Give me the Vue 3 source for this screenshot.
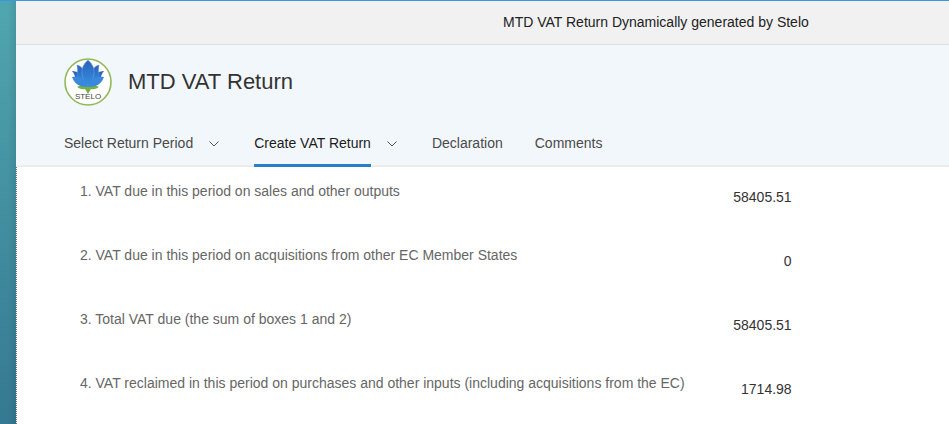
<template>
    <div class="page">
        <main class="window">
            <div class="banner">MTD VAT Return Dynamically generated by Stelo</div>
            <header class="header">
                <div class="brand">
                    <svg class="logo" viewBox="0 0 48 48" role="img" aria-label="Stelo">
                        <defs>
                            <linearGradient id="petal" x1="0" y1="0" x2="0" y2="1">
                                <stop offset="0" stop-color="#2a62b8" />
                                <stop offset="1" stop-color="#3592e6" />
                            </linearGradient>
                        </defs>
                        <circle cx="24" cy="24" r="23" fill="#fff" stroke="#93b956" stroke-width="1.6" />
                        <path d="M16 24 H32 L31 27 L35 29 Q31 32 27 31 L24 36 L21 31 Q17 32 13 29 L17 27Z" fill="#78b043" />
                        <path d="M8 13 Q17 12 23 27 Q15 28 11 24 Q12 17 8 13Z" fill="#2d67bb" />
                        <path d="M40 13 Q31 12 25 27 Q33 28 37 24 Q36 17 40 13Z" fill="#2d67bb" />
                        <path d="M13 7 Q21 8 24 27 Q15 26 13 17 Q14 11 13 7Z" fill="url(#petal)" stroke="#6a9edb" stroke-width=".4" />
                        <path d="M35 7 Q27 8 24 27 Q33 26 35 17 Q34 11 35 7Z" fill="url(#petal)" stroke="#6a9edb" stroke-width=".4" />
                        <path d="M24 2 Q31 8 30 16 Q29 24 24 29 Q19 24 18 16 Q17 8 24 2Z" fill="url(#petal)" stroke="#6a9edb" stroke-width=".6" />
                        <path d="M8 19 Q20 16 24 29 Q11 29 8 19Z M40 19 Q28 16 24 29 Q37 29 40 19Z" fill="#3888dc" />
                        <text x="24" y="41" text-anchor="middle">STELO</text>
                    </svg>
                    <h1>MTD VAT Return</h1>
                </div>
                <nav class="tabs">
                    <div v-for="tab in tabs" :key="tab.label" class="tab" :class="{ active: tab.label === activeTab }">
                        <a href="#" @click.prevent="activeTab = tab.label">{{ tab.label }}</a>
                        <button v-if="tab.menu" type="button" :aria-label="tab.label + ' options'">
                            <svg viewBox="0 0 10 6"><path d="M.5 .5 L5 5 L9.500 .5" /></svg>
                        </button>
                    </div>
                </nav>
            </header>
            <table class="boxes">
                <tbody>
                    <tr v-for="(box, index) in boxes" :key="index">
                        <th scope="row">{{ index + 1 }}. {{ box.label }}</th>
                        <td>{{ box.value }}</td>
                    </tr>
                </tbody>
            </table>
        </main>
    </div>
</template>
<script setup>
    import {ref} from 'vue';

    const activeTab = ref('Create VAT Return');

    const tabs = [
        { label: 'Select Return Period', menu: true },
        { label: 'Create VAT Return', menu: true },
        { label: 'Declaration', menu: false },
        { label: 'Comments', menu: false }
    ];

    const boxes = ref([
        { label: 'VAT due in this period on sales and other outputs', value: '58405.51' },
        { label: 'VAT due in this period on acquisitions from other EC Member States', value: '0' },
        { label: 'Total VAT due (the sum of boxes 1 and 2)', value: '58405.51' },
        { label: 'VAT reclaimed in this period on purchases and other inputs (including acquisitions from the EC)', value: '1714.98' }
    ]);
</script>
<style>
    body{
        margin: 0;
    }
</style>
<style scoped>
    .page{
        box-sizing: border-box;
        min-height: 100vh;
        display: flex;
        padding-left: 16px;
        border-top: 1px solid #3b97dd;
        background: linear-gradient(90deg, transparent 8px, rgba(0, 50, 60, .12) 16px), linear-gradient(#50a6af, #357891);
        font-family: "Liberation Sans", Arial, sans-serif;
        font-size: 14px;
        line-height: 20px;
    }
    .window{
        flex: 1;
        min-width: 0;
        display: flex;
        flex-direction: column;
        background: #fff;
    }
    .banner{
        padding: 11px 0 12px 487px;
        border-bottom: 1px solid #dedfe0;
        background: #f1f1f1;
        color: #222;
        white-space: nowrap;
    }
    .header{
        padding: 13px 48px 0;
        border-bottom: 2px solid #ececec;
        background: #f2f7fc;
    }
    .brand{
        display: flex;
        align-items: center;
        gap: 16px;
    }
    .logo{
        width: 48px;
        height: 48px;
    }
    .logo text{
        font-size: 8px;
        fill: #444;
    }
    h1{
        margin: 0;
        font-size: 22px;
        line-height: 28px;
        font-weight: normal;
        color: #333;
    }
    .tabs{
        display: flex;
        gap: 32px;
        margin: 16px 0 -2px;
    }
    .tab{
        display: flex;
        align-items: flex-start;
    }
    .tab a{
        padding: 11px 0;
        border-bottom: 3px solid transparent;
        color: #4a4a4a;
        text-decoration: none;
        white-space: nowrap;
    }
    .tab.active a{
        border-color: #2b7fc3;
        color: #1c1c1c;
    }
    .tab button{
        display: flex;
        margin: 19px 3px 0 16px;
        padding: 0;
        border: 0;
        background: none;
    }
    .tab button svg{
        width: 10px;
        height: 6px;
        fill: none;
        stroke: #555;
    }
    .boxes{
        flex: 1;
        display: block;
        border-left: 1px dotted #777;
        border-spacing: 0;
    }
    th, td{
        box-sizing: border-box;
        height: 64px;
        padding: 0;
        vertical-align: top;
        font-weight: normal;
        white-space: nowrap;
    }
    th{
        padding: 14px 0 0 63px;
        text-align: left;
        color: #666;
    }
    td{
        width: 107px;
        padding-top: 20px;
        text-align: right;
        color: #333;
    }
</style>
